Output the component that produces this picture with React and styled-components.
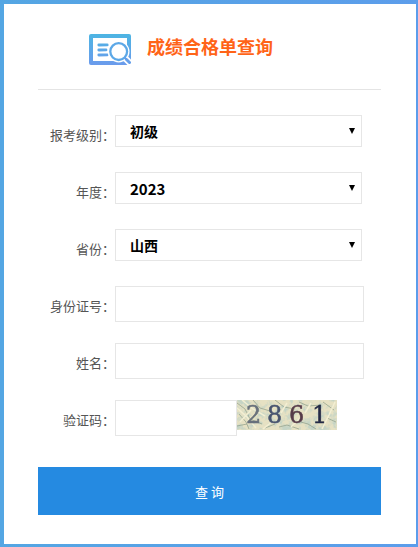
import React, { useState } from "react";
import styled, { createGlobalStyle } from "styled-components";

const fontStack = `"Noto Sans CJK SC", "Noto Sans", sans-serif`;

const GlobalStyle = createGlobalStyle`
  * {
    box-sizing: border-box;
  }
  body {
    margin: 0;
    font-family: ${fontStack};
    font-size: 13px;
    color: #555;
  }
`;

const StylePage = styled.div`
  min-height: 100vh;
  padding: 4px 2px 3px 4px;
  background: linear-gradient(to right, #54a6e3, #5c9deb);
`;

const StyleCard = styled.main`
  padding: 0 35px 29px 34px;
  background: #fff;
`;

const StyleHeader = styled.header`
  display: flex;
  align-items: flex-start;
  gap: 16px;
  height: 86px;
  padding: 30px 0 0 51px;
  border-bottom: 1px solid #e4e4e4;
  h1 {
    margin: 0;
    font-size: 18px;
    line-height: 24px;
    font-weight: bold;
    color: #ff6418;
  }
`;

const StyleForm = styled.form`
  padding-top: 25px;
`;

const StyleRows = styled.div`
  display: grid;
  gap: 15px;
  margin-bottom: 25px;
`;

const StyleRow = styled.div`
  display: flex;
  align-items: flex-start;
  height: 42px;
  label {
    flex: none;
    width: 77px;
    line-height: 40px;
    text-align: right;
  }
`;

const StyleSelect = styled.div`
  position: relative;
  flex: 1;
  margin-right: 19px;
  select {
    display: block;
    width: 100%;
    height: 32px;
    padding: 0 24px 0 14px;
    border: 1px solid #e6e6e6;
    border-radius: 0;
    background: #fff;
    appearance: none;
    font-family: ${fontStack};
    font-size: ${({ $numeric }) => ($numeric ? "15px" : "14px")};
    font-weight: bold;
    color: #000;
  }
  &::after {
    content: "";
    position: absolute;
    top: 13px;
    right: 7px;
    border: 3px solid transparent;
    border-top: 6px solid #000;
    border-bottom: 0;
    pointer-events: none;
  }
`;

const StyleInput = styled.input`
  flex: ${({ $short }) => ($short ? "0 1 122px" : "1")};
  min-width: 0;
  height: 36px;
  margin-right: ${({ $short }) => ($short ? "0" : "17px")};
  padding: 0 14px;
  border: 1px solid #e6e6e6;
  border-radius: 0;
  background: #fff;
  font-family: ${fontStack};
  font-size: 14px;
`;

const StyleSubmit = styled.button`
  display: block;
  width: 100%;
  height: 48px;
  padding: 0;
  border: 0;
  background: #258ae1;
  font-family: ${fontStack};
  font-size: 13px;
  color: #fff;
  cursor: pointer;
`;

const HeaderIcon = () => (
  <svg width="42" height="31" viewBox="0 0 42 31" fill="none" aria-hidden="true">
    <defs>
      <linearGradient id="iconFill" x1="0" y1="0" x2="0" y2="31" gradientUnits="userSpaceOnUse">
        <stop stopColor="#4db5e3" />
        <stop offset="1" stopColor="#6b9bec" />
      </linearGradient>
    </defs>
    <path
      fill="url(#iconFill)"
      fillRule="evenodd"
      d="M2 0H40Q42 0 42 2V29Q42 31 40 31H2Q0 31 0 29V2Q0 0 2 0ZM4 4V27H38V4Z"
    />
    <g stroke="url(#iconFill)" strokeWidth="2.8" strokeLinecap="round">
      <path d="M9.8 11L18.2 10.9M9.8 16L17 15.9M9.8 21L18.2 20.9" />
    </g>
    <circle cx="29.7" cy="17.6" r="10.8" fill="#fff" />
    <path d="M35 23L42.5 30.5" stroke="#fff" strokeWidth="6.5" />
    <circle cx="29.7" cy="17.6" r="8.4" stroke="#5ca8e7" strokeWidth="2.3" />
    <path d="M35.5 23.5L37.5 25.5" stroke="#659fea" strokeWidth="2" />
    <path d="M37.5 25.5L40.5 28.5" stroke="#659fea" strokeWidth="3" strokeLinecap="round" />
  </svg>
);

// digit, x, colour
const captchaDigits = [
  ["2", 9, "#68717b"],
  ["8", 30, "#48546f"],
  ["6", 52, "#563b49"],
  ["1", 75, "#252b45"],
];

const Captcha = () => (
  <svg width="100" height="30" viewBox="0 0 100 30" role="img" aria-label="验证码图片">
    <defs>
      <filter id="speckle" x="0" y="0" width="100%" height="100%">
        <feTurbulence type="fractalNoise" baseFrequency="0.16" numOctaves="3" seed="8" />
        <feColorMatrix values="0 0 0 0 0.56  0 0 0 0 0.66  0 0 0 0 0.56  4 0 0 0 -1.8" />
      </filter>
      <filter id="soften">
        <feGaussianBlur stdDeviation="0.6" />
      </filter>
    </defs>
    <rect width="100" height="30" fill="#e6e1c3" />
    <rect width="100" height="30" filter="url(#speckle)" />
    <g fill="none" filter="url(#soften)">
      <path
        stroke="#8d9c87"
        strokeOpacity="0.7"
        d="M0 3L8 9L13 19L25 24M2 14L9 22L12 29M16 0L23 8L33 11M38 0L47 7L58 9M60 21L71 24L79 29M62 2L71 6L84 5M42 27L50 25L62 29M0 26L10 24M86 2L97 10M90 18L99 22M28 28L38 24"
      />
      <path
        stroke="#f3efd3"
        strokeWidth="1.5"
        d="M0 8L10 17L19 28M5 0L16 9L28 16M26 29L36 21M44 13L50 3M54 27L64 17M85 29L92 15L98 2M68 13L74 3M3 22L14 10"
      />
    </g>
    <g fontFamily="DejaVu Serif, serif" fontSize="24" strokeWidth="0.5" filter="url(#soften)">
      {captchaDigits.map(([digit, x, color]) => (
        <text key={x} x={x} y="23" fill={color} stroke={color}>
          {digit}
        </text>
      ))}
    </g>
  </svg>
);

const selectList = [
  { id: "level", name: "报考级别：", options: ["初级", "中级", "高级"] },
  { id: "year", name: "年度：", options: ["2023", "2022", "2021"], numeric: true },
  { id: "province", name: "省份：", options: ["山西", "北京", "河北"] },
];

const inputList = [
  { id: "idCard", name: "身份证号：" },
  { id: "userName", name: "姓名：" },
  { id: "captcha", name: "验证码：", short: true },
];

export default function App() {
  const [formData, setFormData] = useState({
    level: "初级",
    year: "2023",
    province: "山西",
    idCard: "",
    userName: "",
    captcha: "",
  });

  const handleChange = ({ target: { name, value } }) =>
    setFormData((prev) => ({ ...prev, [name]: value }));

  return (
    <StylePage>
      <GlobalStyle />
      <StyleCard>
        <StyleHeader>
          <HeaderIcon />
          <h1>成绩合格单查询</h1>
        </StyleHeader>
        <StyleForm onSubmit={(e) => e.preventDefault()}>
          <StyleRows>
            {selectList.map(({ id, name, options, numeric }) => (
              <StyleRow key={id}>
                <label htmlFor={id}>{name}</label>
                <StyleSelect $numeric={numeric}>
                  <select id={id} name={id} value={formData[id]} onChange={handleChange}>
                    {options.map((value) => (
                      <option key={value}>{value}</option>
                    ))}
                  </select>
                </StyleSelect>
              </StyleRow>
            ))}
            {inputList.map(({ id, name, short }) => (
              <StyleRow key={id}>
                <label htmlFor={id}>{name}</label>
                <StyleInput
                  id={id}
                  name={id}
                  type="text"
                  $short={short}
                  value={formData[id]}
                  onChange={handleChange}
                />
                {short && <Captcha />}
              </StyleRow>
            ))}
          </StyleRows>
          <StyleSubmit type="submit">查 询</StyleSubmit>
        </StyleForm>
      </StyleCard>
    </StylePage>
  );
}
